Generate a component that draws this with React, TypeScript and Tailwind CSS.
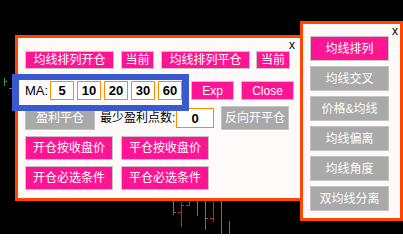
import React from 'react';

const font = { fontFamily: '"Liberation Sans", "Noto Sans CJK SC", sans-serif' };

type BtnProps = { label: string; w: string; h: string; gray?: boolean; className?: string };

const Btn = ({ label, w, h, gray, className = '' }: BtnProps) => (
  <div
    className={`${w} ${h} ${className} flex shrink-0 items-center justify-center border border-[#c4c4c4] text-[12px] leading-none text-white ${
      gray ? 'bg-[#a9a9a9] text-[#f4f4f4]' : 'bg-[#ff1493]'
    }`}
  >
    {label}
  </div>
);

const Candles = () => (
  <svg className="absolute inset-0" width="403" height="234" viewBox="0 0 403 234">
    <g stroke="#2f9a2f" strokeWidth="1" shapeRendering="crispEdges">
      <line x1="4.5" y1="78" x2="4.5" y2="86" />
      <line x1="4" y1="81.5" x2="7" y2="81.5" />
      <line x1="12.5" y1="80" x2="12.5" y2="98" />
      <line x1="9" y1="88.5" x2="12" y2="88.5" />
      <line x1="173.5" y1="200" x2="173.5" y2="215" />
      <line x1="174" y1="212.5" x2="176" y2="212.5" />
      <line x1="197.5" y1="200" x2="197.5" y2="216" />
      <line x1="198" y1="200.5" x2="200" y2="200.5" />
      <line x1="205.5" y1="200" x2="205.5" y2="230" />
      <line x1="206" y1="218.5" x2="208" y2="218.5" />
      <line x1="221.5" y1="200" x2="221.5" y2="234" />
      <line x1="229.5" y1="221" x2="229.5" y2="234" />
    </g>
    <g stroke="#e0123f" strokeWidth="1" shapeRendering="crispEdges">
      <line x1="181.5" y1="202" x2="181.5" y2="227" />
      <line x1="178" y1="212.5" x2="181" y2="212.5" />
      <line x1="182" y1="205.5" x2="184" y2="205.5" />
      <line x1="189.5" y1="200" x2="189.5" y2="206" />
      <line x1="186" y1="205.5" x2="189" y2="205.5" />
      <line x1="213.5" y1="200" x2="213.5" y2="222" />
      <line x1="210" y1="218.5" x2="213" y2="218.5" />
    </g>
  </svg>
);

const MaBox = () => (
  <div className="absolute left-[12px] top-[74px] h-[37px] w-[177px] border-x-[7px] border-y-[6px] border-[#3a58d0] bg-[#fffafa]">
    <div className="flex h-full items-start pt-[1px] pl-[6px]">
      <span className="mt-[2px] w-[25px] text-[13px] leading-[16px] text-black">MA:</span>
      <div className="flex gap-[3px]">
        {['5', '10', '20', '30', '60'].map((v) => (
          <div
            key={v}
            className="flex h-[19px] w-[24px] items-center justify-center border border-[#ff8c00] bg-white text-[13px] font-bold leading-none text-black"
          >
            {v}
          </div>
        ))}
      </div>
    </div>
  </div>
);

const MainPanel = () => (
  <div className="absolute left-[15px] top-[35px] h-[166px] w-[288px] border-[3px] border-[#ff4500] bg-[#fffafa]">
    <span className="absolute right-[5px] top-[1px] text-[12px] leading-none text-black">x</span>
    <div className="flex flex-col pl-[7px] pt-[13px]">
      <div className="flex h-[18px]">
        <Btn label="均线排列开仓" w="w-[89px]" h="h-[18px]" />
        <Btn label="当前" w="w-[33px]" h="h-[18px]" className="ml-[7px]" />
        <Btn label="均线排列平仓" w="w-[89px]" h="h-[18px]" className="ml-[7px]" />
        <Btn label="当前" w="w-[34px]" h="h-[18px]" className="ml-[6px]" />
      </div>
      <div className="mt-[12px] flex h-[19px]">
        <div className="w-[166px] shrink-0" />
        <Btn label="Exp" w="w-[43px]" h="h-[19px]" />
        <Btn label="Close" w="w-[53px]" h="h-[19px]" className="ml-[7px]" />
      </div>
      <div className="mt-[6px] flex h-[24px] items-center">
        <Btn label="盈利平仓" w="w-[70px]" h="h-[24px]" gray />
        <span className="ml-[5px] w-[76px] shrink-0 text-[12px] leading-none text-black">最少盈利点数:</span>
        <div className="flex h-[20px] w-[38px] shrink-0 items-center justify-center border border-[#ff8c00] bg-white text-[13px] font-bold leading-none text-black">
          0
        </div>
        <Btn label="反向开平仓" w="w-[68px]" h="h-[24px]" gray className="ml-[7px]" />
      </div>
      <div className="mt-[6px] flex h-[24px] gap-[8px]">
        <Btn label="开仓按收盘价" w="w-[88px]" h="h-[24px]" />
        <Btn label="平仓按收盘价" w="w-[88px]" h="h-[24px]" />
      </div>
      <div className="mt-[6px] flex h-[24px] gap-[8px]">
        <Btn label="开仓必选条件" w="w-[88px]" h="h-[24px]" />
        <Btn label="平仓必选条件" w="w-[88px]" h="h-[24px]" />
      </div>
    </div>
  </div>
);

const SidePanel = () => (
  <div className="absolute left-[300px] top-[21px] h-[200px] w-[103px] border-[3px] border-[#ff4500] bg-[#fffafa]">
    <span className="absolute right-[2px] top-[1px] text-[12px] leading-none text-black">x</span>
    <div className="flex flex-col gap-[5px] pl-[7px] pt-[12px]">
      <Btn label="均线排列" w="w-[79px]" h="h-[25px]" />
      <Btn label="均线交叉" w="w-[79px]" h="h-[25px]" gray />
      <Btn label="价格&均线" w="w-[79px]" h="h-[25px]" gray />
      <Btn label="均线偏离" w="w-[79px]" h="h-[25px]" gray />
      <Btn label="均线角度" w="w-[79px]" h="h-[25px]" gray />
      <Btn label="双均线分离" w="w-[79px]" h="h-[25px]" gray />
    </div>
  </div>
);

export default function App() {
  return (
    <div className="relative h-[234px] w-[403px] overflow-hidden bg-black" style={font}>
      <Candles />
      <MainPanel />
      <SidePanel />
      <MaBox />
    </div>
  );
}
